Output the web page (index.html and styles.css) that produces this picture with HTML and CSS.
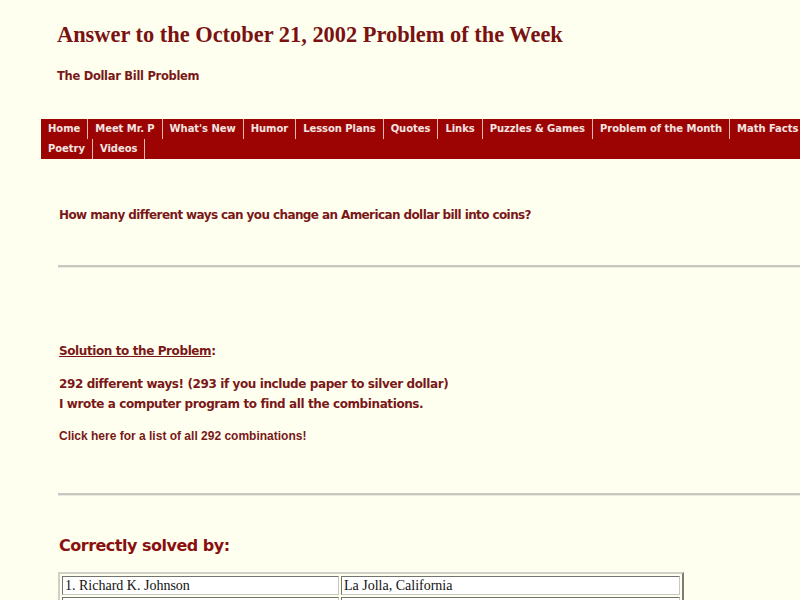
FILE: index.html
```html
<!DOCTYPE html>
<html>
<head>
<meta charset="utf-8">
<title>Answer to the October 21, 2002 Problem of the Week</title>
<link rel="stylesheet" href="styles.css">
</head>
<body>
<div class="page">
  <header class="masthead">
    <h1 class="title">Answer to the October 21, 2002 Problem of the Week</h1>
    <p class="subtitle">The Dollar Bill Problem</p>
  </header>
  <nav class="nav">
    <a class="nav-item" href="#">Home</a><a class="nav-item" href="#">Meet Mr. P</a><a class="nav-item" href="#">What's New</a><a class="nav-item" href="#">Humor</a><a class="nav-item" href="#">Lesson Plans</a><a class="nav-item" href="#">Quotes</a><a class="nav-item" href="#">Links</a><a class="nav-item" href="#">Puzzles &amp; Games</a><a class="nav-item" href="#">Problem of the Month</a><a class="nav-item" href="#">Math Facts</a><a class="nav-item" href="#">Poetry</a><a class="nav-item" href="#">Videos</a>
  </nav>
  <main class="content">
    <p class="question">How many different ways can you change an American dollar bill into coins?</p>
    <hr class="rule rule-first">
    <p class="solution-head"><span class="u">Solution to the Problem</span>:</p>
    <p class="answer">292 different ways! (293 if you include paper to silver dollar)<br>I wrote a computer program to find all the combinations.</p>
    <p class="link-line"><a href="#" class="plain-link">Click here for a list of all 292 combinations!</a></p>
    <hr class="rule rule-second">
    <h2 class="solved">Correctly solved by:</h2>
    <table class="solvers">
      <tr><td class="c-name">1. Richard K. Johnson</td><td class="c-place">La Jolla, California</td></tr>
      <tr><td class="c-name">&nbsp;</td><td class="c-place">&nbsp;</td></tr>
    </table>
  </main>
</div>
</body>
</html>
```
FILE: styles.css
```css
html, body {
  margin: 0;
  padding: 0;
  background: #fffff0;
  overflow: hidden;
}
.page {
  width: 800px;
  color: #7a1818;
}
.masthead {
  padding: 22px 0 0 57px;
}
.title {
  margin: 0;
  font-family: "Liberation Serif", serif;
  font-weight: bold;
  font-size: 22.4px;
  line-height: 26px;
  color: #7a1212;
}
.subtitle {
  margin: 20px 0 0 0;
  font-family: "DejaVu Sans", sans-serif;
  font-weight: bold;
  font-size: 11.5px;
  line-height: 16px;
  letter-spacing: -0.3px;
  color: #7a1818;
}
.nav {
  margin: 35px 0 0 41px;
  background: #9c0404;
  display: flex;
  flex-wrap: wrap;
  width: 780px;
}
.nav-item {
  display: block;
  height: 20px;
  line-height: 20px;
  padding: 0 7px;
  font-family: "DejaVu Sans", sans-serif;
  font-weight: bold;
  font-size: 10px;
  letter-spacing: -0.05px;
  color: #f4e4e0;
  text-decoration: none;
  border-right: 1px solid #e9b8b0;
}
.content {
  padding-left: 59px;
  font-family: "DejaVu Sans", sans-serif;
  font-size: 12px;
}
.question {
  margin: 48px 0 0 0;
  font-weight: bold;
  line-height: 16px;
  letter-spacing: -0.6px;
}
.rule {
  border: 0;
  height: 2px;
  margin: 0 0 0 -1px;
  background: #c8c8c0;
  border-bottom: 1px solid #e8e8e0;
}
.rule-first {
  margin-top: 42px;
}
.solution-head {
  margin: 75px 0 0 0;
  line-height: 16px;
  font-weight: bold;
  letter-spacing: -0.4px;
}
.u {
  text-decoration: underline;
}
.answer {
  margin: 15px 0 0 0;
  line-height: 20px;
  font-weight: bold;
  letter-spacing: -0.4px;
}
.link-line {
  margin: 14px 0 0 0;
  line-height: 16px;
  font-family: "Liberation Sans", sans-serif;
  font-weight: bold;
  font-size: 12px;
}
.plain-link {
  color: #7a1818;
  text-decoration: none;
}
.rule-second {
  margin-top: 49px;
}
.solved {
  margin: 38px 0 0 0;
  font-size: 16px;
  line-height: 24px;
  font-weight: bold;
  color: #8a1010;
  letter-spacing: -0.5px;
}
.solvers {
  margin: 14px 0 0 -1px;
  width: 626px;
  border: 2px outset #d0d0c8;
  border-spacing: 2px;
  background: #fffff0;
}
.solvers td {
  border: 1px inset #c8c8c0;
  background: #ffffff;
  font-family: "Liberation Serif", serif;
  font-size: 14px;
  line-height: 17px;
  color: #111;
  padding: 0 2px;
}
.c-name {
  width: 271px;
}
```
